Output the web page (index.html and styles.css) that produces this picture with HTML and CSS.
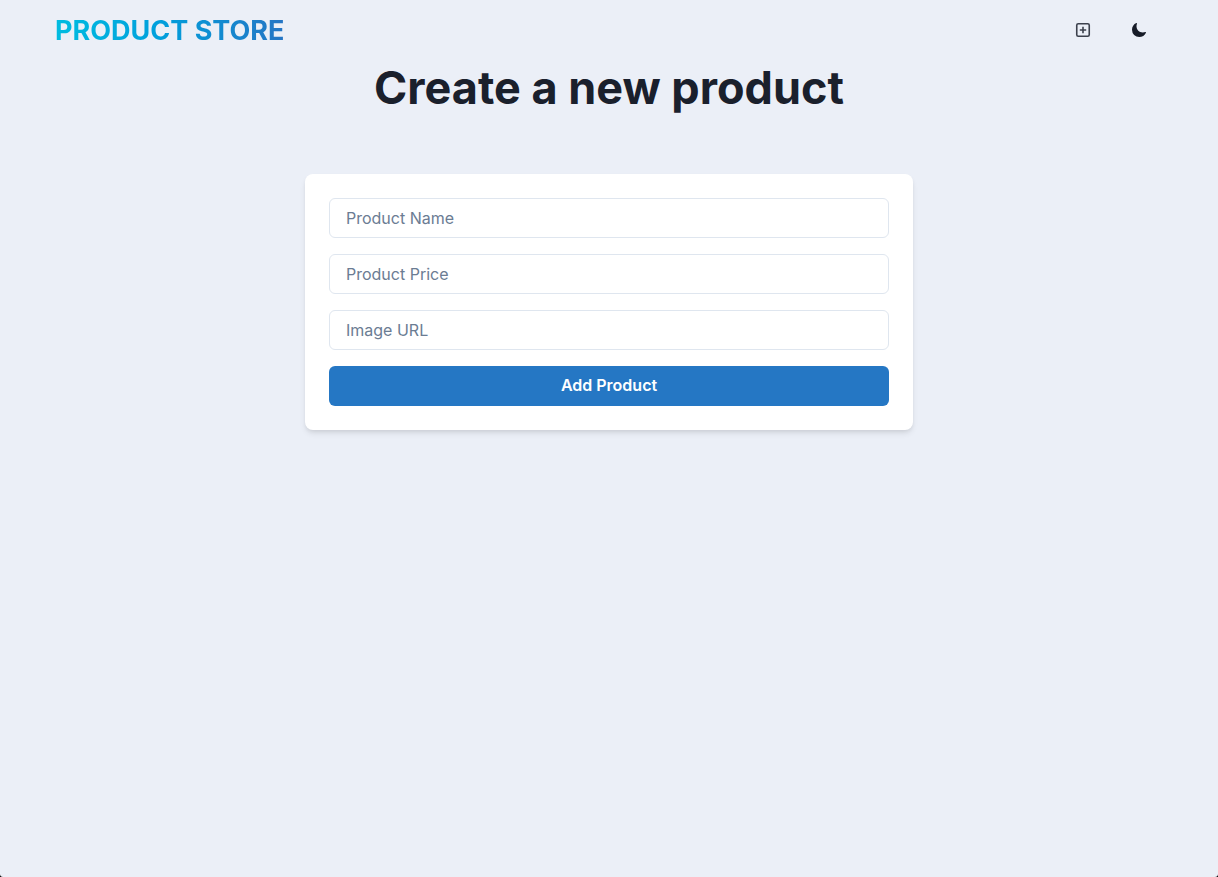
FILE: index.html
```html
<!DOCTYPE html>
<html lang="en">
<head>
<meta charset="utf-8">
<title>Product Store</title>
<link rel="stylesheet" href="styles.css">
</head>
<body>
<header class="navbar">
  <a class="brand" href="#">PRODUCT STORE</a>
  <nav class="actions">
    <a class="icon-button icon-button-soft" href="#" aria-label="Create product">
      <svg viewBox="0 0 20 20" width="20" height="20" fill="none" stroke="currentColor" stroke-width="1.6"><rect x="3.750" y="3.750" width="12.500" height="12.500" rx="1.500"/><path d="M10 6.800v6.400M6.800 10h6.400"/></svg>
    </a>
    <button class="icon-button" type="button" aria-label="Toggle color mode">
      <svg viewBox="0 0 512 512" width="16" height="16" fill="currentColor"><path d="M264 480A232 232 0 0 1 32 248c0-94 54-178.280 137.610-214.670a16 16 0 0 1 21.060 21.060C181.070 76.430 176 104.660 176 136c0 110.280 89.720 200 200 200 31.340 0 59.570-5.070 81.610-14.670a16 16 0 0 1 21.060 21.060C442.280 426 358 480 264 480z"/></svg>
    </button>
  </nav>
</header>
<main class="page">
  <h1 class="title">Create a new product</h1>
  <form class="card">
    <input class="field" type="text" placeholder="Product Name" aria-label="Product Name">
    <input class="field" type="text" placeholder="Product Price" aria-label="Product Price">
    <input class="field" type="text" placeholder="Image URL" aria-label="Image URL">
    <button class="submit" type="button">Add Product</button>
  </form>
</main>
</body>
</html>
```
FILE: styles.css
```css
* { box-sizing: border-box; }
html { background: #000; }
body {
  margin: 0;
  min-height: 100vh;
  border-radius: 0 0 3px 3px;
  background: #ebeff7;
  color: #1a202c;
  font-family: Inter, "Liberation Sans", sans-serif;
  font-size: 16px;
  line-height: 24px;
}
.navbar {
  display: flex;
  align-items: center;
  justify-content: space-between;
  max-width: 1140px;
  height: 60px;
  margin: 0 auto;
  padding: 0 16px;
}
.brand {
  padding-top: 2px;
  font-size: 27px;
  line-height: 42px;
  font-weight: 700;
  text-decoration: none;
  color: transparent;
  background: linear-gradient(to right, #00bce0, #00a0dc 45%, #2575c4);
  -webkit-background-clip: text;
  background-clip: text;
}
.actions { display: flex; gap: 8px; }
.icon-button {
  display: flex;
  align-items: center;
  justify-content: center;
  width: 48px;
  height: 40px;
  padding: 0;
  border: 0;
  border-radius: 6px;
  background: transparent;
  color: #171c28;
  cursor: pointer;
}
.icon-button-soft { color: #3c414d; }
.page {
  display: flex;
  flex-direction: column;
  gap: 58px;
  max-width: 640px;
  margin: 0 auto;
  padding: 0 16px;
}
.title {
  margin: 0;
  font-size: 45px;
  line-height: 56px;
  font-weight: 700;
  text-align: center;
}
.card {
  display: flex;
  flex-direction: column;
  gap: 16px;
  padding: 24px;
  border-radius: 8px;
  background: #fff;
  box-shadow: 0 4px 6px -1px rgba(0, 0, 0, .1), 0 2px 4px -1px rgba(0, 0, 0, .06);
}
.field {
  width: 100%;
  height: 40px;
  padding: 0 16px;
  border: 1px solid #dfe6ef;
  border-radius: 6px;
  background: #fff;
  color: inherit;
  font: inherit;
}
.field::placeholder { color: #6b7c93; opacity: 1; }
.submit {
  height: 40px;
  padding: 0 16px 2px;
  border: 0;
  border-radius: 6px;
  background: #2577c4;
  color: #fff;
  font: inherit;
  font-weight: 600;
  cursor: pointer;
}
```
